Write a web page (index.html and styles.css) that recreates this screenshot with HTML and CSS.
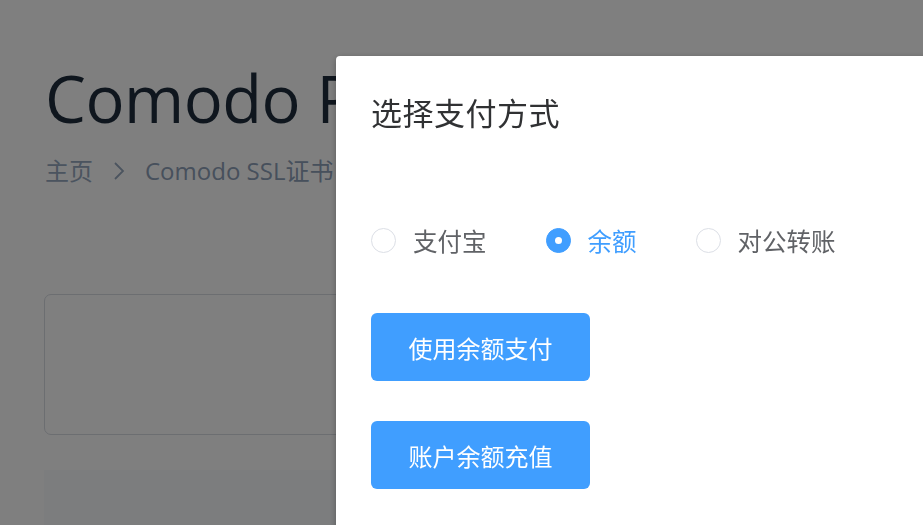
FILE: index.html
```html
<!DOCTYPE html>
<html lang="zh-CN">
<head>
<meta charset="utf-8">
<title>选择支付方式</title>
<link rel="stylesheet" href="styles.css">
</head>
<body>
<div class="page">
  <h1 class="title">Comodo PositiveSSL证书</h1>
  <div class="breadcrumb">
    <span class="crumb">主页</span>
    <svg class="sep" width="14" height="24" viewBox="0 0 14 24"><path d="M3 4 L11 12 L3 20" fill="none" stroke="#97a8be" stroke-width="1.8"/></svg>
    <span class="crumb">Comodo SSL证书</span>
  </div>
  <div class="card"></div>
  <div class="panel"></div>
</div>
<div class="overlay"></div>
<div class="dialog">
  <div class="dialog-title">选择支付方式</div>
  <div class="radios">
    <label class="radio"><span class="circle"></span><span class="label">支付宝</span></label>
    <label class="radio checked"><span class="circle"></span><span class="label">余额</span></label>
    <label class="radio"><span class="circle"></span><span class="label">对公转账</span></label>
  </div>
  <div class="actions">
    <button class="btn">使用余额支付</button>
    <button class="btn">账户余额充值</button>
  </div>
</div>
</body>
</html>
```

FILE: styles.css
```css
html, body {
  margin: 0;
  padding: 0;
  background: #ffffff;
  overflow: hidden;
  width: 923px;
  height: 525px;
  font-family: "Open Sans", "Noto Sans CJK SC", sans-serif;
}
.page {
  padding: 58px 0 0 44px;
  display: flex;
  flex-direction: column;
}
.title {
  margin: 0 0 0 1px;
  font-size: 65px;
  font-weight: 400;
  line-height: 80px;
  color: #1f2d3d;
  letter-spacing: -0.5px;
  white-space: nowrap;
}
.breadcrumb {
  margin: 15px 0 0 1px;
  display: flex;
  align-items: center;
  gap: 19px;
  font-size: 24px;
  line-height: 36px;
  color: #97a8be;
  white-space: nowrap;
}
.breadcrumb .crumb:last-child {
  color: #8ea0b8;
}
.card {
  margin-top: 105px;
  height: 139px;
  border: 1px solid #d8dce2;
  border-radius: 7px;
  width: 1000px;
}
.panel {
  margin-top: 35px;
  height: 80px;
  background: #f8fafd;
  width: 1000px;
}
.overlay {
  position: fixed;
  inset: 0;
  background: rgba(0, 0, 0, 0.5);
}
.dialog {
  position: fixed;
  left: 336px;
  top: 56px;
  width: 700px;
  height: 520px;
  background: #ffffff;
  border-radius: 4px;
  box-shadow: 0 2px 6px rgba(0, 0, 0, 0.3);
  padding: 35px 35px 0 35px;
  box-sizing: border-box;
  display: flex;
  flex-direction: column;
}
.dialog-title {
  font-size: 31px;
  line-height: 42px;
  color: #303133;
  letter-spacing: 0.5px;
  font-family: "Noto Sans CJK SC", sans-serif;
}
.radios {
  margin-top: 89px;
  display: flex;
  align-items: center;
  height: 36px;
}
.radio {
  display: flex;
  align-items: center;
  margin-right: 59px;
  color: #606266;
  font-size: 24.5px;
  font-family: "Noto Sans CJK SC", sans-serif;
}
.circle {
  width: 23px;
  height: 23px;
  border: 1px solid #dcdfe6;
  border-radius: 50%;
  box-sizing: content-box;
  position: relative;
  background: #fff;
}
.label {
  margin-left: 17px;
}
.radio.checked {
  color: #409eff;
  margin-right: 59px;
}
.radio.checked .circle {
  background: #409eff;
  border-color: #409eff;
}
.radio.checked .circle::after {
  content: "";
  position: absolute;
  left: 50%;
  top: 50%;
  width: 7px;
  height: 7px;
  margin: -3.5px 0 0 -3.5px;
  background: #fff;
  border-radius: 50%;
}
.actions {
  margin-top: 55px;
  display: flex;
  flex-direction: column;
  align-items: flex-start;
  gap: 40px;
}
.btn {
  width: 219px;
  height: 68px;
  border: none;
  border-radius: 6px;
  background: #409eff;
  color: #ffffff;
  font-size: 24px;
  font-family: "Noto Sans CJK SC", sans-serif;
  padding: 0;
}
```
